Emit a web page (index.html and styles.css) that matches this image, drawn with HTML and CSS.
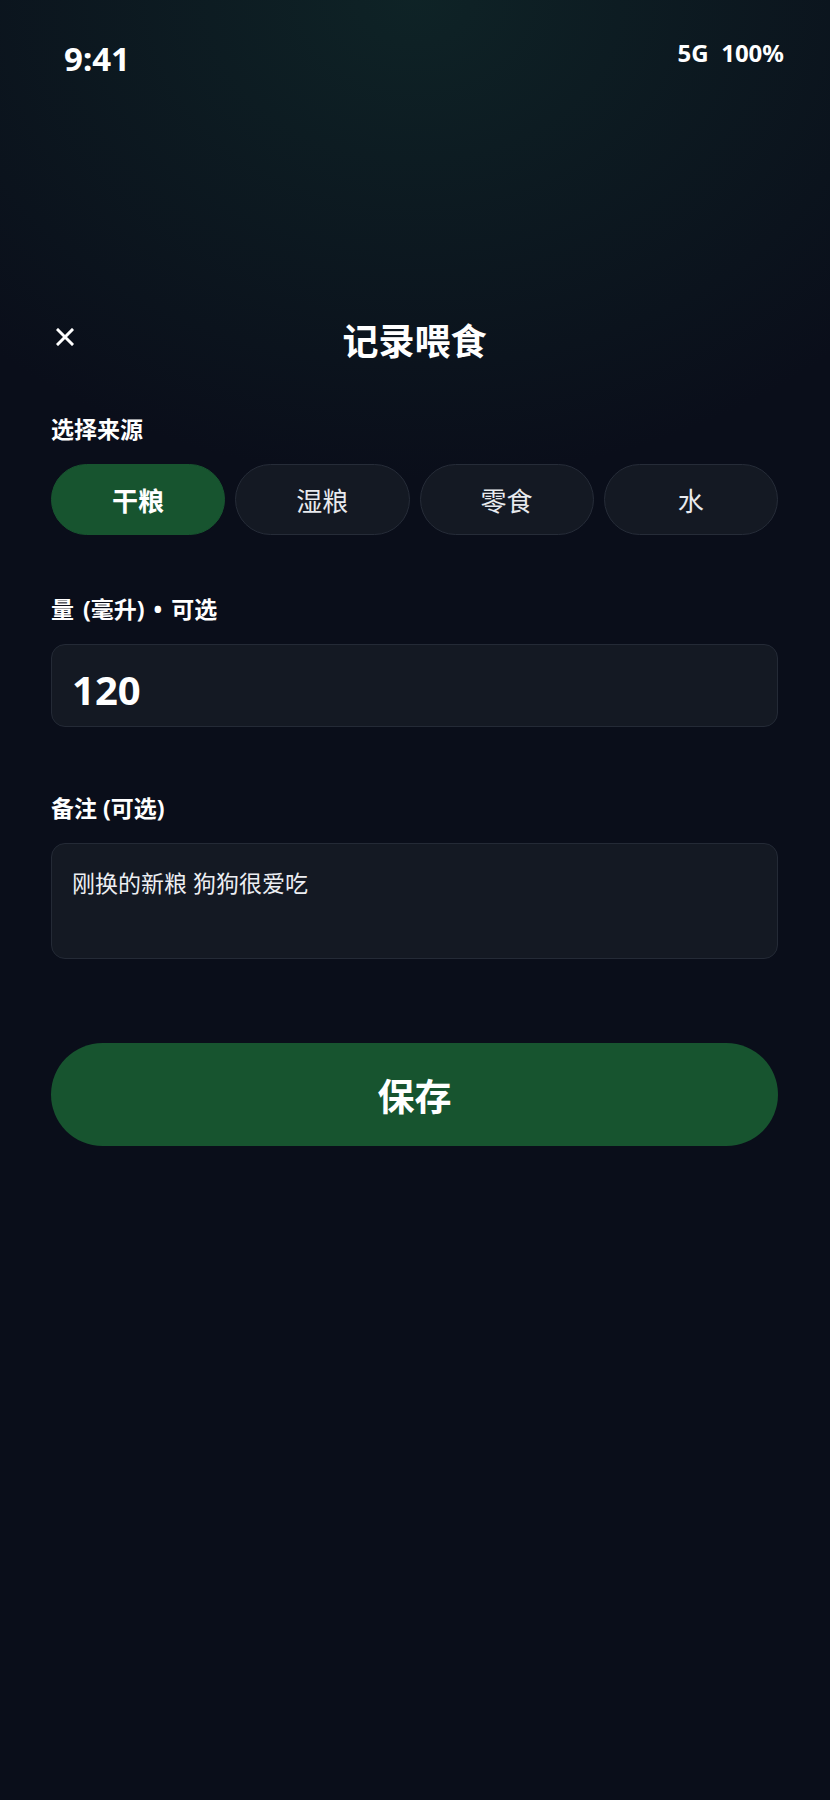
FILE: index.html
```html
<!DOCTYPE html>
<html lang="zh-CN">
<head>
  <meta charset="UTF-8">
  <meta name="viewport" content="width=device-width, initial-scale=1.0">
  <title>记录喂食</title>
  <link rel="stylesheet" href="styles.css">
</head>
<body>
  <div class="status-bar">
    <span class="time">9:41</span>
    <span class="signal">5G&nbsp;&nbsp;100%</span>
  </div>

  <div class="sheet">
    <div class="sheet-header">
      <button class="close-btn" type="button" aria-label="关闭">
        <svg width="18" height="18" viewBox="0 0 18 18">
          <path d="M2 2 L16 16 M16 2 L2 16" stroke="#fff" stroke-width="3" stroke-linecap="square"/>
        </svg>
      </button>
      <h1>记录喂食</h1>
      <span></span>
    </div>

    <form id="feedForm">
      <div class="form-group">
        <label>选择来源</label>
        <div class="chips">
          <button type="button" class="chip active">干粮</button>
          <button type="button" class="chip">湿粮</button>
          <button type="button" class="chip">零食</button>
          <button type="button" class="chip">水</button>
        </div>
      </div>

      <div class="form-group">
        <label for="amount" class="wide">量 (毫升) • 可选</label>
        <input type="text" id="amount" class="amount-input" value="120">
      </div>

      <div class="form-group">
        <label for="note">备注 (可选)</label>
        <textarea id="note" class="note-input">刚换的新粮 狗狗很爱吃</textarea>
      </div>

      <button type="button" class="save-btn">保存</button>
    </form>
  </div>
</body>
</html>
```

FILE: styles.css
```css
body {
  margin: 0;
  padding: 0;
  min-height: 1800px;
  color: #fff;
  font-family: "Noto Sans", "Noto Sans CJK SC", sans-serif;
  background-color: #0a0e1a;
  background-image: radial-gradient(ellipse 620px 480px at 50% 0%, rgba(18, 52, 48, 0.55), rgba(10, 14, 26, 0) 100%);
  background-repeat: no-repeat;
}

.status-bar {
  display: flex;
  justify-content: space-between;
  align-items: center;
  height: 40px;
  margin-top: 38px;
  padding: 0 46px 0 64px;
  font-weight: 700;
}

.time {
  font-size: 33px;
}

.signal {
  font-size: 24px;
  margin-top: -12px;
}

.sheet {
  padding: 0 52px 0 51px;
}

.sheet-header {
  display: grid;
  grid-template-columns: 1fr auto 1fr;
  align-items: center;
  margin-top: 240px;
  height: 48px;
}

.close-btn {
  width: 28px;
  height: 28px;
  padding: 0;
  margin-top: -10px;
  border: none;
  background: none;
  display: flex;
  align-items: center;
  justify-content: center;
  cursor: pointer;
}

h1 {
  margin: 0;
  font-size: 36px;
  line-height: 48px;
  font-weight: 700;
}

.form-group {
  display: flex;
  flex-direction: column;
  gap: 20px;
  margin-top: 48px;
}

.form-group + .form-group {
  margin-top: 59px;
}

label {
  font-size: 23px;
  line-height: 30px;
  font-weight: 700;
}

label.wide {
  word-spacing: 3px;
}

.chips {
  display: grid;
  grid-template-columns: repeat(4, 1fr);
  gap: 10px;
}

.chip {
  height: 71px;
  border-radius: 36px;
  border: 1px solid #262c38;
  background: #141923;
  color: #e8eaee;
  font-family: inherit;
  font-size: 26px;
  font-weight: 400;
  cursor: pointer;
}

.chip.active {
  background: #17542f;
  border-color: #17542f;
  color: #fff;
  font-weight: 700;
}

.amount-input,
.note-input {
  box-sizing: border-box;
  width: 100%;
  border: 1px solid #242a36;
  border-radius: 14px;
  background: #141923;
  color: #fff;
  font-family: inherit;
  outline: none;
}

.amount-input {
  height: 83px;
  padding: 8px 20px 0;
  font-size: 40px;
  font-weight: 700;
}

.note-input {
  height: 116px;
  padding: 23px 20px;
  font-size: 23px;
  line-height: 32px;
  color: #eceef2;
  resize: none;
}

.form-group:last-of-type {
  margin-top: 66px;
}

.save-btn {
  display: block;
  width: 100%;
  height: 103px;
  margin-top: 84px;
  border: none;
  border-radius: 52px;
  background: #17542f;
  color: #fff;
  font-family: inherit;
  font-size: 37px;
  font-weight: 700;
  cursor: pointer;
}
```
